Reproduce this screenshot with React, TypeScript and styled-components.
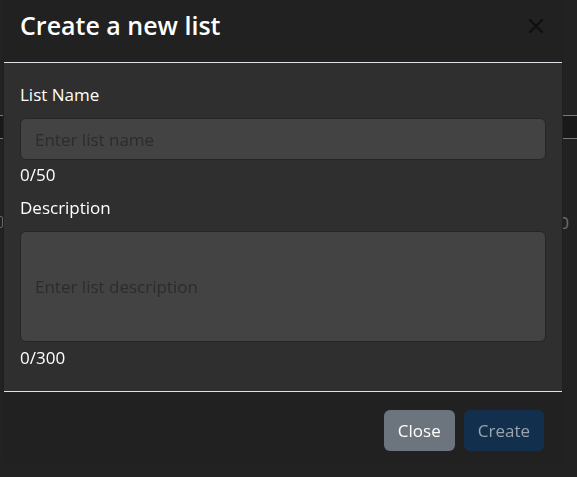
import React, { useState } from "react";
import styled, { createGlobalStyle } from "styled-components";

const GlobalStyle = createGlobalStyle`
  * { box-sizing: border-box; }
  body {
    margin: 0;
    background: #444444;
    font-family: "Open Sans", "Noto Sans", sans-serif;
    color: #ffffff;
    overflow: hidden;
  }
`;

const App = () => {
  const [name, setName] = useState("");
  const [desc, setDesc] = useState("");

  return (
    <>
      <GlobalStyle />
      <Page>
        <HeadRow />
        <Row>
          <Check />
          <Cell>0</Cell>
        </Row>
      </Page>
      <Backdrop />
      <Dialog>
        <Header>
          <Title>Create a new list</Title>
          <CloseX aria-label="Close">
            <svg width="18" height="18" viewBox="0 0 16 16">
              <path
                d="M2 2 L14 14 M14 2 L2 14"
                stroke="#000"
                strokeWidth="2"
                fill="none"
              />
            </svg>
          </CloseX>
        </Header>
        <Body>
          <Label>List Name</Label>
          <Input
            placeholder="Enter list name"
            value={name}
            maxLength={50}
            onChange={(e) => setName(e.target.value)}
          />
          <Counter>{name.length}/50</Counter>
          <Label $top={9}>Description</Label>
          <TextArea
            placeholder="Enter list description"
            value={desc}
            maxLength={300}
            onChange={(e) => setDesc(e.target.value)}
          />
          <Counter $top={4}>{desc.length}/300</Counter>
        </Body>
        <Footer>
          <Button $variant="secondary">Close</Button>
          <Button $variant="primary">Create</Button>
        </Footer>
      </Dialog>
    </>
  );
};

export default App;

const Page = styled.div`
  width: 100%;
  height: 100vh;
  padding-top: 115px;
`;

const HeadRow = styled.div`
  height: 24px;
  border-top: 1px solid #eeeeee;
  border-bottom: 1px solid #eeeeee;
  background: #333333;
`;

const Row = styled.div`
  display: flex;
  align-items: center;
  justify-content: space-between;
  margin-top: 71px;
  height: 24px;
`;

const Check = styled.div`
  width: 12px;
  height: 12px;
  margin-left: -9px;
  border: 1px solid #cccccc;
  border-radius: 2px;
`;

const Cell = styled.div`
  font-size: 17px;
  color: #dddddd;
  padding-right: 8px;
`;

const Backdrop = styled.div`
  position: fixed;
  inset: 0;
  background: rgba(0, 0, 0, 0.5);
`;

const Dialog = styled.div`
  position: fixed;
  top: -8px;
  left: 3px;
  width: 560px;
  border: 1px solid rgba(0, 0, 0, 0.3);
  border-radius: 8px;
  overflow: hidden;
  background: #2f2f2f;
  display: flex;
  flex-direction: column;
`;

const Header = styled.div`
  display: flex;
  align-items: center;
  justify-content: space-between;
  padding: 17px 16px 21px 16px;
  background: #212121;
  border-bottom: 1px solid #dee2e6;
`;

const Title = styled.h4`
  margin: 0;
  font-size: 25px;
  font-weight: 600;
  line-height: 31px;
  color: #ffffff;
`;

const CloseX = styled.button`
  width: 18px;
  height: 18px;
  padding: 0;
  margin-right: 1px;
  border: none;
  background: transparent;
  opacity: 0.5;
  display: flex;
  cursor: pointer;
`;

const Body = styled.div`
  display: flex;
  flex-direction: column;
  padding: 20px 16px 21px 16px;
  background: #2f2f2f;
`;

const Label = styled.label<{ $top?: number }>`
  font-size: 17px;
  line-height: 24px;
  margin-top: ${(p) => p.$top ?? 0}px;
  margin-bottom: 11px;
  color: #ffffff;
`;

const fieldStyle = `
  width: 100%;
  border: 1px solid #262626;
  border-radius: 6px;
  background: #434343;
  color: #ffffff;
  font-family: "Open Sans", "Noto Sans", sans-serif;
  font-size: 17px;
  line-height: 24px;
  outline: none;
  &::placeholder {
    color: #2c2c2c;
  }
`;

const Input = styled.input`
  ${fieldStyle}
  height: 42px;
  padding: 0 14px;
`;

const TextArea = styled.textarea`
  ${fieldStyle}
  height: 111px;
  padding: 43px 14px 0 14px;
  resize: none;
  display: block;
`;

const Counter = styled.div<{ $top?: number }>`
  font-size: 17px;
  line-height: 24px;
  margin-top: ${(p) => p.$top ?? 3}px;
  color: #ffffff;
`;

const Footer = styled.div`
  display: flex;
  justify-content: flex-end;
  gap: 9px;
  padding: 18px 18px 18px 16px;
  background: #212121;
  border-top: 1px solid #dee2e6;
`;

const Button = styled.button<{ $variant: "primary" | "secondary" }>`
  height: 41px;
  padding: 0 14px;
  border: none;
  border-radius: 6px;
  font-family: "Open Sans", "Noto Sans", sans-serif;
  font-size: 17px;
  cursor: pointer;
  background: ${(p) => (p.$variant === "primary" ? "#12304d" : "#6c757d")};
  color: ${(p) => (p.$variant === "primary" ? "#9ba4ad" : "#ffffff")};
`;
